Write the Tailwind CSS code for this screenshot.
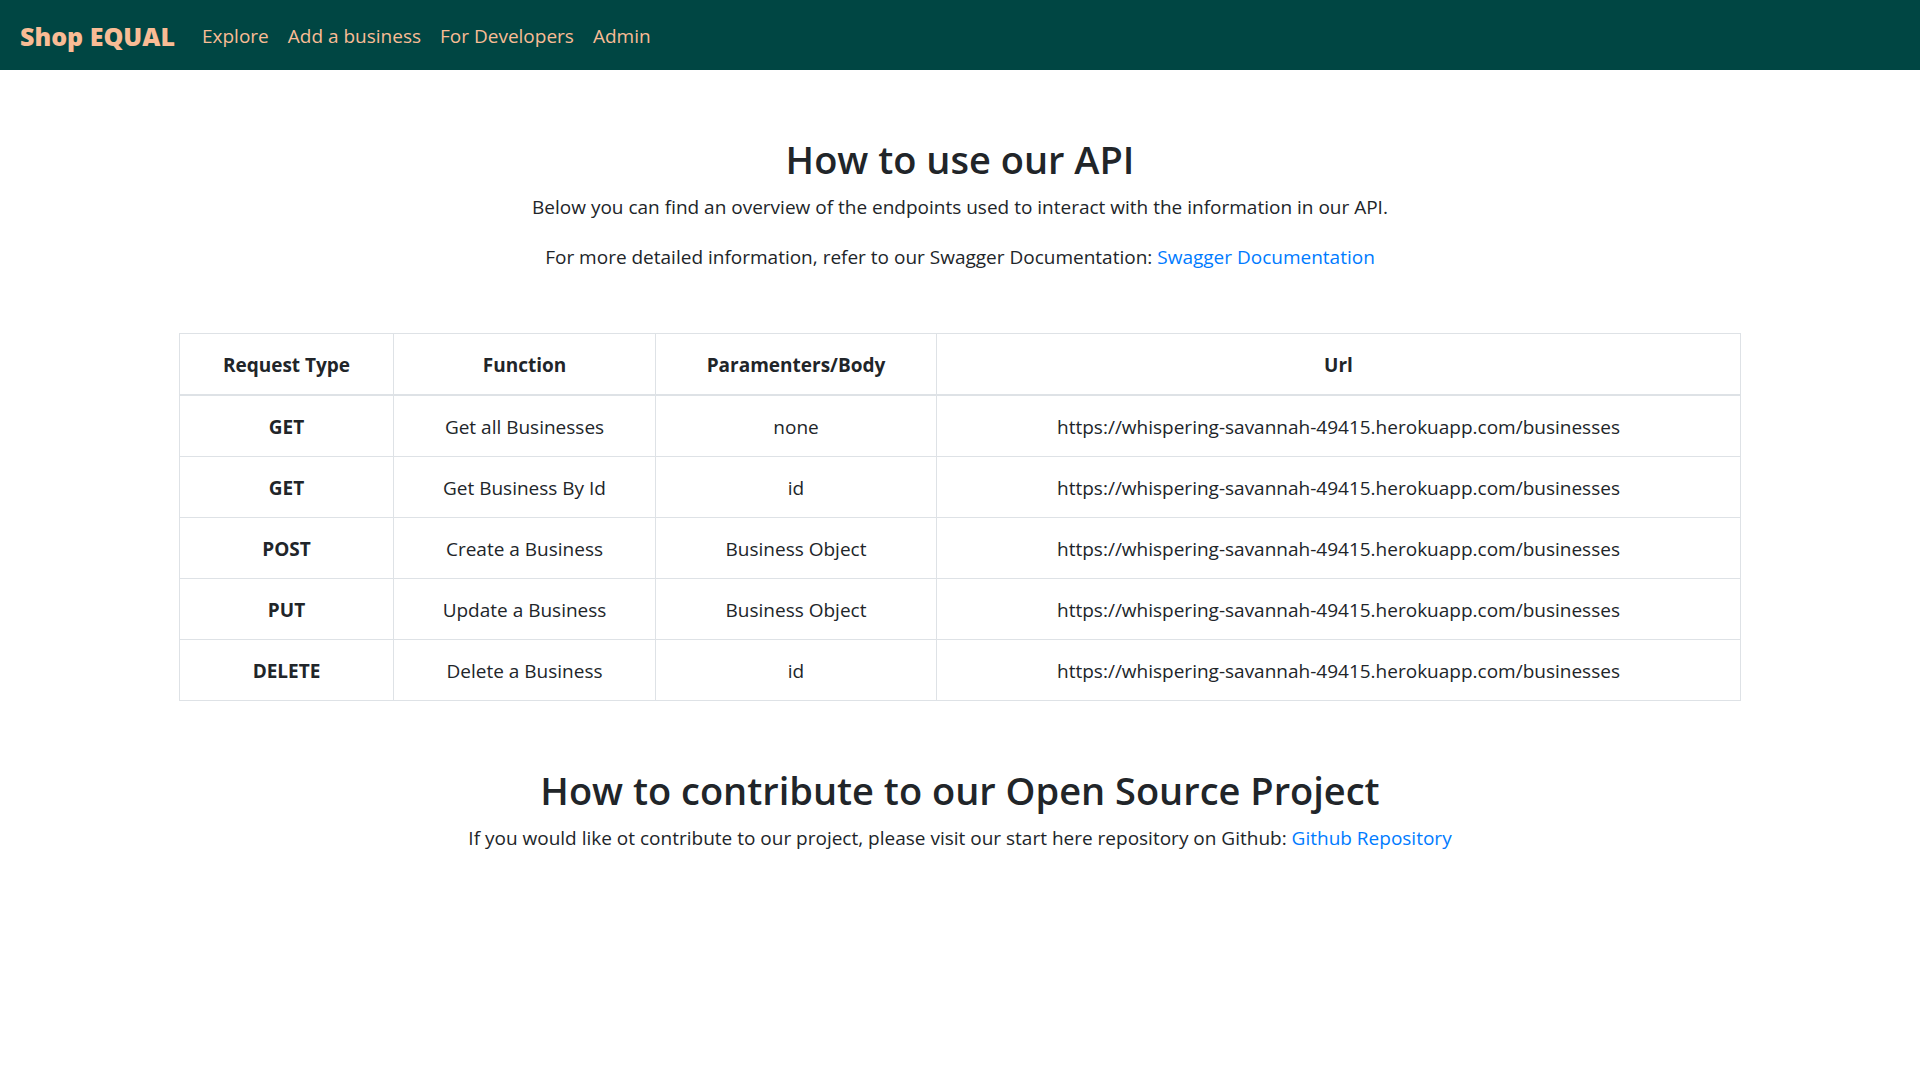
<!DOCTYPE html>
<html lang="en">
<head>
<meta charset="utf-8">
<meta name="viewport" content="width=device-width, initial-scale=1">
<title>Shop EQUAL</title>
<script src="https://cdn.jsdelivr.net/npm/@tailwindcss/browser@4"></script>
</head>
<body class="min-h-screen bg-white font-['Open_Sans','Noto_Sans',sans-serif] text-[19px] leading-[30px] text-[#212529]">
<nav class="flex h-[70px] items-center bg-[#004643] px-5 text-[#f9bc95]">
  <a href="#" class="mr-[27px] pt-[2px] text-[25px] font-extrabold whitespace-nowrap">Shop EQUAL</a>
  <ul class="flex gap-[19px] pt-[2px] whitespace-nowrap">
    <li><a href="#">Explore</a></li>
    <li><a href="#">Add a business</a></li>
    <li><a href="#">For Developers</a></li>
    <li><a href="#">Admin</a></li>
  </ul>
</nav>
<main class="mx-auto max-w-[1562px] pt-16 text-center">
  <section>
    <h1 class="mb-2 text-[38px] leading-[50px] font-semibold">How to use our API</h1>
    <p class="mb-5">Below you can find an overview of the endpoints used to interact with the information in our API.</p>
    <p>For more detailed information, refer to our Swagger Documentation: <a href="#" class="text-[#007bff]">Swagger Documentation</a></p>
  </section>
  <table class="mt-[61px] w-full table-fixed border-collapse [&_td]:border [&_td]:border-[#dee2e6] [&_td]:pt-4 [&_td]:pb-[14px] [&_th]:border [&_th]:border-[#dee2e6] [&_th]:pt-4 [&_th]:pb-[14px] [&_th]:font-bold">
    <colgroup><col class="w-[214px]"><col class="w-[262px]"><col class="w-[281px]"><col></colgroup>
    <thead class="border-b-2 border-[#dee2e6]">
      <tr><th scope="col">Request Type</th><th scope="col">Function</th><th scope="col">Paramenters/Body</th><th scope="col">Url</th></tr>
    </thead>
    <tbody>
      <tr><th scope="row">GET</th><td>Get all Businesses</td><td>none</td><td>https://whispering-savannah-49415.herokuapp.com/businesses</td></tr>
      <tr><th scope="row">GET</th><td>Get Business By Id</td><td>id</td><td>https://whispering-savannah-49415.herokuapp.com/businesses</td></tr>
      <tr><th scope="row">POST</th><td>Create a Business</td><td>Business Object</td><td>https://whispering-savannah-49415.herokuapp.com/businesses</td></tr>
      <tr><th scope="row">PUT</th><td>Update a Business</td><td>Business Object</td><td>https://whispering-savannah-49415.herokuapp.com/businesses</td></tr>
      <tr><th scope="row">DELETE</th><td>Delete a Business</td><td>id</td><td>https://whispering-savannah-49415.herokuapp.com/businesses</td></tr>
    </tbody>
  </table>
  <section class="pt-16">
    <h2 class="mb-2 text-[38px] leading-[50px] font-semibold">How to contribute to our Open Source Project</h2>
    <p>If you would like ot contribute to our project, please visit our start here repository on Github: <a href="#" class="text-[#007bff]">Github Repository</a></p>
  </section>
</main>
</body>
</html>
